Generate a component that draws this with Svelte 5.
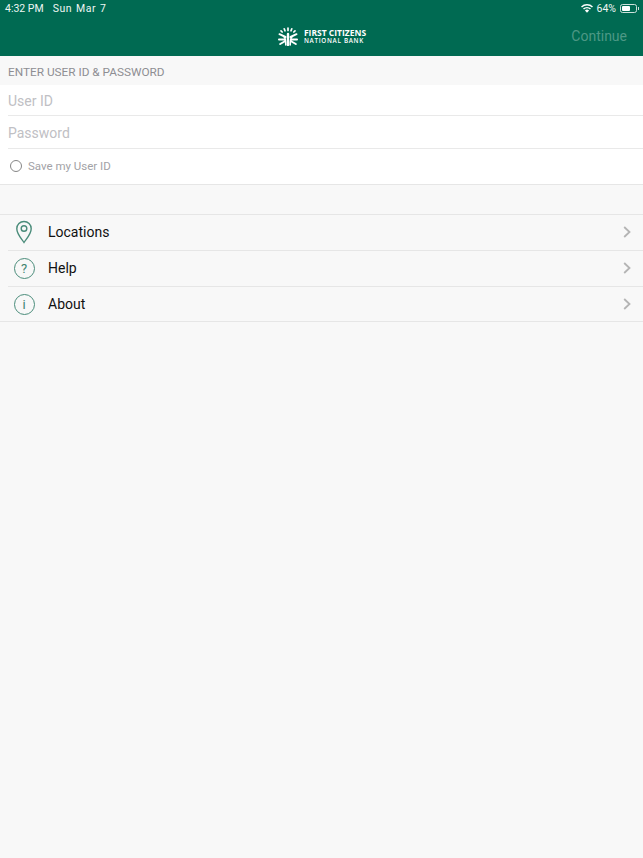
<script lang="ts">
  const menuItems = ["Locations", "Help", "About"];
</script>

<div class="screen">
  <header class="topbar">
    <div class="status">
      <div class="status__time">
        <span>4:32 PM</span>
        <span class="status__date">Sun Mar 7</span>
      </div>
      <div class="status__right">
        <svg class="wifi" viewBox="0 0 14 10" width="12" height="9" aria-hidden="true">
          <path d="M7 10 4.6 7.4a3.4 3.4 0 0 1 4.8 0Z" fill="#fff" />
          <path d="M3.5 6.3 2.3 5a6.8 6.8 0 0 1 9.4 0l-1.2 1.3a5 5 0 0 0-7 0Z" fill="#fff" />
          <path d="M1.2 3.9 0 2.7a10 10 0 0 1 14 0l-1.2 1.2a8.3 8.3 0 0 0-11.6 0Z" fill="#fff" />
        </svg>
        <span>64%</span>
        <span class="battery"><span class="battery__fill"></span></span>
      </div>
    </div>
    <div class="nav">
      <div class="logo">
        <svg viewBox="0 0 20 19" width="20" height="19" aria-hidden="true">
          <g stroke="#fff" stroke-linecap="round" fill="none">
            <path d="M10 7V18" stroke-width="2.400" />
            <path d="M7.800 18C7.800 14 7.500 11.500 6.200 10M12.200 18C12.200 14 12.500 11.500 13.800 10" stroke-width="1.600" />
            <path d="M7.500 10 1.500 7.200M12.500 10 18.500 7.200M6.800 12.500 1 12.500M13.200 12.500 19 12.500M6.500 14.500 2.200 17M13.500 14.500 17.800 17" stroke-width="2" />
            <path d="M10 1V3.500M6.200 1.800 7 3.800M13.800 1.800 13 3.800M3 3.800 4.200 5M17 3.800 15.800 5" stroke-width="1.700" />
          </g>
        </svg>
        <div class="logo__text">
          <span class="logo__top">FIRST CITIZENS</span>
          <span class="logo__bottom">NATIONAL BANK</span>
        </div>
      </div>
      <span class="nav__action">Continue</span>
    </div>
  </header>

  <div class="section-title">ENTER USER ID &amp; PASSWORD</div>

  <section class="form">
    <div class="field"><span>User ID</span></div>
    <div class="field field--tall"><span>Password</span></div>
    <label class="save">
      <span class="save__radio"></span>
      <span>Save my User ID</span>
    </label>
  </section>

  <ul class="menu">
    {#each menuItems as item}
      <li class="menu__row">
        <span class="menu__icon">
          {#if item === "Locations"}
            <svg viewBox="0 0 22 26" width="22" height="26" aria-hidden="true">
              <path d="M11 23.500C8.500 19.500 3.800 15 3.800 9.700a7.200 7.200 0 0 1 14.400 0C18.200 15 13.500 19.500 11 23.500Z" fill="none" stroke="#4a8c7a" stroke-width="1.400" />
              <circle cx="11" cy="9.500" r="2.800" fill="none" stroke="#4a8c7a" stroke-width="1.400" />
            </svg>
          {:else}
            <span class="menu__badge">{item === "Help" ? "?" : "i"}</span>
          {/if}
        </span>
        <span class="menu__label">{item}</span>
        <svg class="menu__chevron" viewBox="0 0 8 12" width="8" height="12" aria-hidden="true">
          <path d="M1.200 1 6.500 6 1.200 11" fill="none" stroke="#b4b4b4" stroke-width="1.800" />
        </svg>
      </li>
    {/each}
  </ul>
</div>

<style>
  :global(body) {
    margin: 0;
    background: #f8f8f8;
  }

  .screen {
    height: 858px;
    overflow: hidden;
    background: #f8f8f8;
    font-family: Roboto, "Liberation Sans", sans-serif;
  }

  .topbar {
    height: 56px;
    background: #006a52;
    color: #fff;
  }

  .status {
    height: 16px;
    display: flex;
    align-items: center;
    justify-content: space-between;
    padding: 0 4px 0 5px;
    font-size: 10.500px;
    color: #eef6f3;
  }

  .status__time {
    display: flex;
    gap: 9px;
  }

  .status__date {
    letter-spacing: 0.500px;
    word-spacing: 1px;
  }

  .status__right {
    display: flex;
    align-items: center;
    gap: 4px;
  }

  .battery {
    position: relative;
    width: 17px;
    height: 9px;
    border: 1px solid #cfe2dc;
    border-radius: 2.500px;
    padding: 1px;
    box-sizing: border-box;
    margin-right: 2px;
  }

  .battery::after {
    content: "";
    position: absolute;
    right: -3px;
    top: 2px;
    width: 1.500px;
    height: 3px;
    background: #cfe2dc;
  }

  .battery__fill {
    display: block;
    width: 64%;
    height: 100%;
    background: #fff;
    border-radius: 1px;
  }

  .nav {
    height: 40px;
    position: relative;
    display: flex;
    align-items: center;
    justify-content: center;
  }

  .logo {
    display: flex;
    align-items: center;
    gap: 6px;
    margin-left: 1px;
  }

  .logo__text {
    display: flex;
    flex-direction: column;
    color: #fff;
    font-family: "Open Sans", sans-serif;
  }

  .logo__top {
    font-size: 8.500px;
    font-weight: 700;
    line-height: 8px;
  }

  .logo__bottom {
    font-size: 6.300px;
    font-weight: 600;
    line-height: 7px;
    letter-spacing: 0.700px;
  }

  .nav__action {
    position: absolute;
    right: 16px;
    top: 10px;
    font-size: 14px;
    line-height: 20px;
    color: #4d9885;
  }

  .section-title {
    height: 29px;
    box-sizing: border-box;
    padding: 9px 0 0 8px;
    font-size: 11.800px;
    line-height: 15px;
    color: #8e8e93;
  }

  .form {
    background: #fff;
    border-bottom: 1px solid #e6e6e6;
  }

  .field {
    height: 31px;
    box-sizing: border-box;
    margin-left: 8px;
    padding-top: 2px;
    display: flex;
    align-items: center;
    border-bottom: 1px solid #e9e9e9;
    font-size: 14px;
    color: #c0c0c4;
  }

  .field--tall {
    height: 33px;
    padding-top: 2px;
  }

  .save {
    height: 35px;
    display: flex;
    align-items: center;
    gap: 6px;
    padding-left: 10px;
    padding-bottom: 2px;
    box-sizing: border-box;
    font-size: 11.500px;
    color: #a2a2a6;
  }

  .save__radio {
    width: 10px;
    height: 10px;
    border: 1.200px solid #868686;
    border-radius: 50%;
  }

  .menu {
    list-style: none;
    margin: 29px 0 0;
    padding: 0;
    border-top: 1px solid #e6e6e6;
    border-bottom: 1px solid #e6e6e6;
  }

  .menu__row {
    height: 36px;
    box-sizing: border-box;
    display: flex;
    align-items: center;
    padding: 0 12px 2px 13px;
    position: relative;
  }

  .menu__row::after {
    content: "";
    position: absolute;
    left: 8px;
    right: 0;
    bottom: 0;
    border-top: 1px solid #e6e6e6;
  }

  .menu__row:last-child {
    height: 34px;
    padding-bottom: 0;
  }

  .menu__row:last-child::after {
    display: none;
  }

  .menu__icon {
    width: 22px;
    display: flex;
    justify-content: center;
    margin-right: 13px;
  }

  .menu__badge {
    width: 21px;
    height: 21px;
    box-sizing: border-box;
    border: 1.400px solid #4a8c7a;
    border-radius: 50%;
    display: flex;
    align-items: center;
    justify-content: center;
    font-size: 13px;
    color: #3f8571;
  }

  .menu__label {
    flex: 1;
    font-size: 14px;
    color: #111;
  }
</style>
